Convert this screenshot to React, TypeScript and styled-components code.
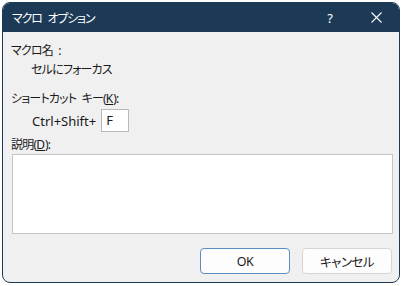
import React from 'react';
import styled, { createGlobalStyle } from 'styled-components';

const GlobalStyle = createGlobalStyle`
  html, body {
    margin: 0;
    padding: 0;
    background: #ffffff;
  }
  body {
    font-family: "Noto Sans", "Noto Sans CJK JP", sans-serif;
    font-size: 12px;
    color: #1a1a1a;
    font-feature-settings: "palt";
  }
`;

const Page = styled.div`
  width: 402px;
  height: 286px;
  padding: 2px 2px 3px 2px;
  box-sizing: border-box;
`;

const Window = styled.div`
  display: flex;
  flex-direction: column;
  width: 100%;
  height: 100%;
  box-sizing: border-box;
  border: 1px solid #1c3a56;
  border-radius: 8px;
  overflow: hidden;
  background: #f0f0f0;
`;

const TitleBar = styled.div`
  display: flex;
  align-items: center;
  height: 29px;
  flex-shrink: 0;
  background: #1c3a56;
  color: #ffffff;
  padding-left: 9px;
`;

const Title = styled.div`
  flex: 1;
  font-size: 12px;
  letter-spacing: -1.2px;
  word-spacing: 4px;
`;

const TitleButton = styled.div<{ $w: number }>`
  display: flex;
  align-items: center;
  justify-content: center;
  width: ${p => p.$w}px;
  height: 100%;
  font-size: 13px;
`;

const Body = styled.div`
  display: flex;
  flex-direction: column;
  flex: 1;
  padding: 10px 6px 0 8px;
`;

const Label = styled.div<{ $indent?: boolean; $mt?: number }>`
  line-height: 18px;
  margin-left: ${p => (p.$indent ? 20 : 0)}px;
  margin-top: ${p => p.$mt ?? 0}px;
  white-space: pre;
  letter-spacing: -0.8px;
  word-spacing: 3px;
`;

const Key = styled.span`
  text-decoration: underline;
  letter-spacing: 0;
`;

const ShortcutRow = styled.div`
  display: flex;
  align-items: center;
  gap: 5px;
  margin-left: 21px;
  margin-top: 1px;
  font-size: 13px;
`;

const KeyBox = styled.div`
  width: 28px;
  height: 23px;
  box-sizing: border-box;
  border: 1px solid #b9b9b9;
  background: #ffffff;
  padding-left: 4px;
  line-height: 21px;
  font-size: 13px;
`;

const TextArea = styled.div`
  height: 80px;
  margin-left: 1px;
  box-sizing: border-box;
  border: 1px solid #c4c4c4;
  background: #ffffff;
`;

const Footer = styled.div`
  display: flex;
  justify-content: flex-end;
  gap: 12px;
  margin-top: 14px;
  margin-right: 1px;
`;

const Button = styled.div<{ $primary?: boolean }>`
  display: flex;
  align-items: center;
  justify-content: center;
  width: 90px;
  height: 26px;
  box-sizing: border-box;
  border: 1px solid ${p => (p.$primary ? '#5a8fc4' : '#d5d5d5')};
  border-radius: 4px;
  background: #fdfdfd;
  font-size: 12.5px;
  letter-spacing: -0.5px;
`;

const App = () => {
  return (
    <>
      <GlobalStyle />
      <Page>
        <Window>
          <TitleBar>
            <Title>マクロ オプション</Title>
            <TitleButton $w={46}>?</TitleButton>
            <TitleButton $w={46}>
              <svg width="11" height="11" viewBox="0 0 11 11">
                <path d="M0.5 0.5L10.5 10.5M10.5 0.5L0.5 10.5" stroke="#fff" strokeWidth="1.1" />
              </svg>
            </TitleButton>
          </TitleBar>
          <Body>
            <Label>マクロ名 :</Label>
            <Label $indent $mt={1}>セルにフォーカス</Label>
            <Label $mt={11}>
              ショートカット キー(<Key>K</Key>):
            </Label>
            <ShortcutRow>
              <span>Ctrl+Shift+</span>
              <KeyBox>F</KeyBox>
            </ShortcutRow>
            <Label $mt={4}>
              説明(<Key>D</Key>):
            </Label>
            <TextArea />
            <Footer>
              <Button $primary>OK</Button>
              <Button>キャンセル</Button>
            </Footer>
          </Body>
        </Window>
      </Page>
    </>
  );
};

export default App;
